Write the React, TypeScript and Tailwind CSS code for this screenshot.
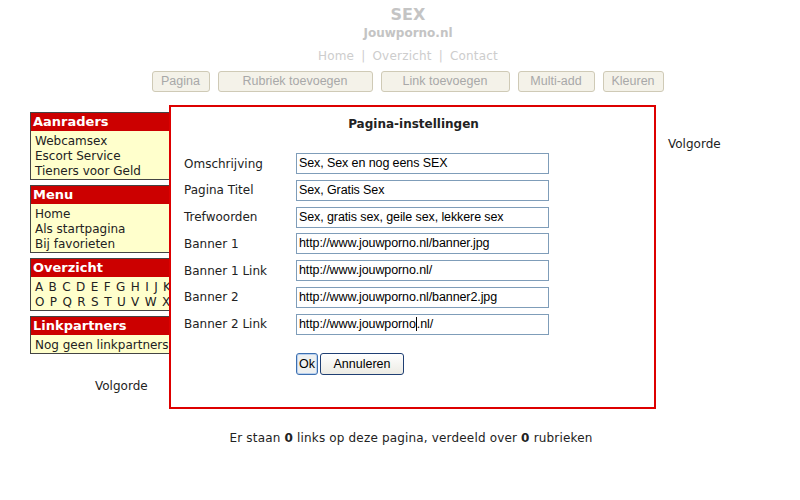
import React from 'react';

const boxes = [
  { title: 'Aanraders', items: ['Webcamsex', 'Escort Service', 'Tieners voor Geld'], spaced: false },
  { title: 'Menu', items: ['Home', 'Als startpagina', 'Bij favorieten'], spaced: false },
  { title: 'Overzicht', items: ['A B C D E F G H I J K L M N', 'O P Q R S T U V W X Y Z'], spaced: true },
  { title: 'Linkpartners', items: ['Nog geen linkpartners'], spaced: false },
];

const tools = [
  { label: 'Pagina', w: 'w-[58px]' },
  { label: 'Rubriek toevoegen', w: 'w-[155px]' },
  { label: 'Link toevoegen', w: 'w-[129px]' },
  { label: 'Multi-add', w: 'w-[77px]' },
  { label: 'Kleuren', w: 'w-[61px]' },
];

const fields = [
  { label: 'Omschrijving', value: 'Sex, Sex en nog eens SEX' },
  { label: 'Pagina Titel', value: 'Sex, Gratis Sex' },
  { label: 'Trefwoorden', value: 'Sex, gratis sex, geile sex, lekkere sex' },
  { label: 'Banner 1', value: 'http://www.jouwporno.nl/banner.jpg' },
  { label: 'Banner 1 Link', value: 'http://www.jouwporno.nl/' },
  { label: 'Banner 2', value: 'http://www.jouwporno.nl/banner2.jpg' },
  { label: 'Banner 2 Link', value: 'http://www.jouwporno.nl/' },
];

export default function App() {
  return (
    <div className="relative w-[800px] h-[500px] bg-white text-[#222] font-['DejaVu_Sans',sans-serif] text-[11px] overflow-hidden">
      {/* Header */}
      <div className="flex flex-col items-center pt-[5px] pl-[16px]">
        <div className="h-[20px] leading-[20px] text-[16px] font-bold text-[#c4c4c4]">SEX</div>
        <div className="h-[17px] leading-[17px] text-[12px] font-bold text-[#c4c4c4]">Jouwporno.nl</div>
        <div className="h-[29px] leading-[29px] text-[12px] text-[#cdcdcd] flex gap-[7px] tracking-[0.2px]">
          <span>Home</span><span>|</span><span>Overzicht</span><span>|</span><span>Contact</span>
        </div>
      </div>

      {/* Toolbar */}
      <div className="flex justify-center gap-[8px] pl-[15px]">
        {tools.map((t) => (
          <div
            key={t.label}
            className={`${t.w} h-[21px] flex items-center justify-center rounded-[3px] border border-[#cfcab6] bg-[#f4f2e9] text-[#a8a8a8] text-[12.5px] font-['Liberation_Sans',sans-serif]`}
          >
            {t.label}
          </div>
        ))}
      </div>

      {/* Main */}
      <div className="flex mt-[20px]">
        <div className="ml-[30px] w-[160px] flex flex-col gap-[5px]">
          {boxes.map((b) => (
            <div key={b.title} className="border border-[#444] bg-[#ffffcc]">
              <div className="bg-[#cc0000] text-white font-bold text-[13px] h-[18px] leading-[18px] pl-[2px] whitespace-nowrap">
                {b.title}
              </div>
              <div className="pl-[4px] pt-[3px] text-[12px] leading-[15px] whitespace-nowrap overflow-hidden">
                {b.items.map((it) => (
                  <div key={it} className={b.spaced ? 'tracking-[0.8px]' : ''}>{it}</div>
                ))}
              </div>
            </div>
          ))}
          <div className="mt-[18px] pl-[65px] text-[12px]">Volgorde</div>
        </div>
        <div className="flex-1" />
        <div className="w-[132px] pt-[23px] text-[12px]">Volgorde</div>
      </div>

      {/* Footer */}
      <div className="absolute left-0 right-0 top-[429px] text-center text-[12px] pl-[22px] tracking-[0.17px]">
        Er staan <b>0</b> links op deze pagina, verdeeld over <b>0</b> rubrieken
      </div>

      {/* Dialog */}
      <div className="absolute left-[169px] top-[105px] w-[487px] h-[304px] bg-white border-2 border-[#dd0000]">
        <div className="text-center font-bold text-[12px] mt-[8px] pl-[2px]">Pagina-instellingen</div>
        <div className="mt-[20px] pl-[13px] flex flex-col gap-[5.8px]">
          {fields.map((f, i) => (
            <div key={f.label} className="flex items-center h-[21px]">
              <div className="w-[112px] text-[12px]">{f.label}</div>
              <div className="w-[253px] h-[21px] border border-[#7f9db9] text-[12.5px] font-['Liberation_Sans',sans-serif] text-black pl-[2px] leading-[19px] tracking-[-0.1px] whitespace-nowrap">
                {i === 6 ? (
                  <>
                    http://www.jouwporno<span className="inline-block w-px h-[14px] bg-black align-middle" />.nl/
                  </>
                ) : (
                  f.value
                )}
              </div>
            </div>
          ))}
        </div>
        <div className="flex gap-[2px] ml-[125px] mt-[18px] font-['Liberation_Sans',sans-serif] text-[12.5px] text-black">
          <button className="w-[22px] h-[22px] rounded-[3px] border border-[#3c6fb0] bg-[#eef0f0] shadow-[inset_0_0_0_1px_#b9d0ee] leading-none">Ok</button>
          <button className="w-[84px] h-[22px] rounded-[3px] border border-[#1f3f73] bg-gradient-to-b from-white to-[#ecebe4] leading-none">Annuleren</button>
        </div>
      </div>
    </div>
  );
}
